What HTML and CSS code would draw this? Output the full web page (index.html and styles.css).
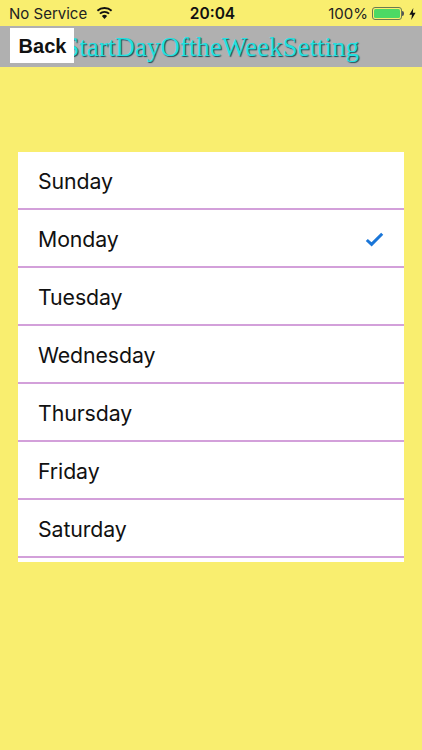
FILE: index.html
```html
<!DOCTYPE html>
<html lang="en">
<head>
<meta charset="utf-8">
<title>StartDayOftheWeekSetting</title>
<link rel="stylesheet" href="styles.css">
</head>
<body>
<div class="status">
  <div class="status-left">
    <span>No Service</span>
    <svg class="wifi" width="17" height="12" viewBox="0 0 17 12"><path d="M8.5 12 5.9 8.9a4 4 0 0 1 5.2 0z" fill="#111"/><path d="M3.9 6.6a7.1 7.1 0 0 1 9.2 0M1.4 3.7a10.9 10.9 0 0 1 14.2 0" fill="none" stroke="#111" stroke-width="1.9"/></svg>
  </div>
  <div class="status-time">20:04</div>
  <div class="status-right">
    <span>100%</span>
    <div class="battery"><div class="battery-fill"></div></div>
    <div class="battery-cap"></div>
    <svg class="bolt" width="7" height="12" viewBox="0 0 7 12"><path d="M4.3 0 0.4 6.8H3L2.2 12 6.6 4.8H3.8z" fill="#111"/></svg>
  </div>
</div>
<header class="nav">
  <h1 class="nav-title">StartDayOftheWeekSetting</h1>
  <button class="back">Back</button>
</header>
<ul class="days">
  <li class="day">Sunday</li>
  <li class="day">Monday<svg class="check" width="19" height="15" viewBox="0 0 19 15"><path d="M1.8 8 6.6 12.4 17.2 1.8" fill="none" stroke="#1a76d8" stroke-width="3"/></svg></li>
  <li class="day">Tuesday</li>
  <li class="day">Wednesday</li>
  <li class="day">Thursday</li>
  <li class="day">Friday</li>
  <li class="day">Saturday</li>
</ul>
</body>
</html>
```
FILE: styles.css
```css
* { box-sizing: border-box; }
html, body { height: 100%; }
body {
  margin: 0;
  background: #f9ee6f;
  font-family: "Inter", "Liberation Sans", sans-serif;
  color: #111;
  overflow: hidden;
}
.status {
  height: 26px;
  display: grid;
  grid-template-columns: 1fr auto 1fr;
  align-items: center;
  padding: 1px 6px 0 9px;
  font-size: 15px;
}
.status-left { display: flex; align-items: center; gap: 9px; color: #222; }
.wifi { margin-top: -1px; }
.status-time { font-weight: 600; font-size: 15.5px; }
.status-right { display: flex; align-items: center; justify-content: flex-end; }
.status-right span { margin-right: 4px; color: #222; }
.battery {
  width: 30px;
  height: 13px;
  border: 1px solid #6a7a50;
  border-radius: 3px;
  padding: 1px;
}
.battery-fill { height: 100%; background: #4cd964; border-radius: 1.5px; }
.battery-cap { width: 2px; height: 5px; background: #555; border-radius: 0 2px 2px 0; margin-right: 5px; }
.nav {
  position: relative;
  height: 41px;
  background: #b0b0b0;
  display: flex;
  align-items: center;
  justify-content: flex-end;
  padding-right: 63px;
}
.nav-title {
  margin: 2px 0 0;
  font-family: "Liberation Serif", serif;
  font-weight: 400;
  font-size: 27px;
  color: #22e0e0;
  text-shadow: 1px 1px 1px #1c4a58;
  white-space: nowrap;
}
.back {
  position: absolute;
  left: 10px;
  top: 2px;
  width: 64px;
  height: 35px;
  border: 0;
  background: #fff;
  color: #111;
  font-family: "Liberation Sans", sans-serif;
  font-weight: 700;
  font-size: 20px;
  padding: 1px 0 0 1px;
}
.days {
  list-style: none;
  margin: 85px 18px 0;
  padding: 0;
  background: #fff;
  height: 410px;
  overflow: hidden;
}
.day {
  height: 58px;
  padding: 2px 20px 0;
  display: flex;
  align-items: center;
  justify-content: space-between;
  font-size: 21.3px;
  letter-spacing: -0.1px;
  border-bottom: 2px solid #d3a0da;
}
```
